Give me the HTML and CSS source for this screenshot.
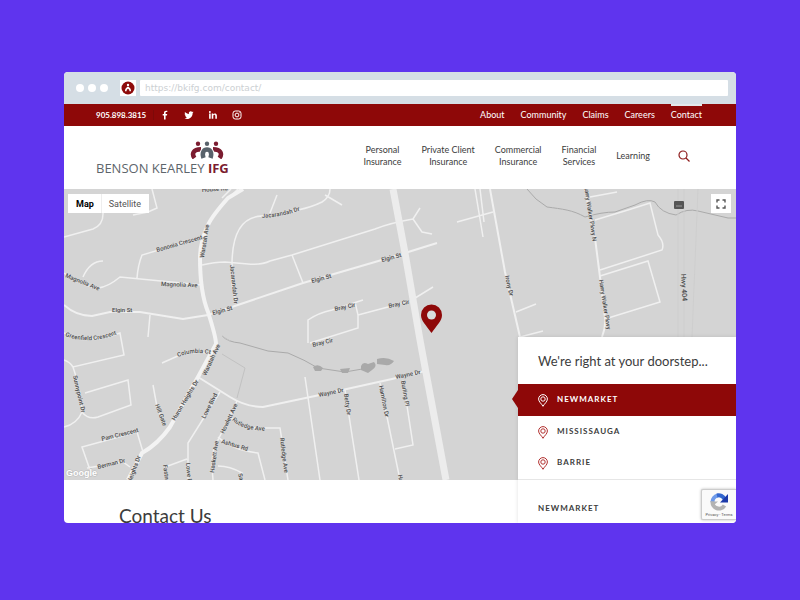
FILE: index.html
```html
<!DOCTYPE html>
<html lang="en">
<head>
    <meta charset="UTF-8">
    <meta name="viewport" content="width=device-width, initial-scale=1.0">
    <title>Contact Us - Benson Kearley IFG</title>
    <link rel="stylesheet" href="styles.css">
</head>
<body>
<div class="browser">
    <div class="browser-bar">
        <span class="dot"></span><span class="dot"></span><span class="dot"></span>
        <span class="favicon">
            <svg viewBox="0 0 16 16" width="16" height="16"><rect width="16" height="16" fill="#fff"/><circle cx="8" cy="8" r="6.5" fill="#8e0b0b"/><circle cx="8" cy="5" r="1.2" fill="#fff"/><path d="M5 11.300Q4.800 8.300 8 6.600 11.200 8.300 11 11.300L9.500 11.300Q9.600 9.300 8 8.800 6.400 9.300 6.500 11.300Z" fill="#fff"/></svg>
        </span>
        <input class="url" type="text" aria-label="Address" value="https://bkifg.com/contact/">
    </div>

    <div class="topbar">
        <a class="phone" href="#">905.898.3815</a>
        <div class="social">
            <a href="#" aria-label="Facebook"><svg viewBox="0 0 10 10" width="10" height="10"><path d="M4 9.5V5.6H2.7V4.1H4V3C4 1.5 4.8.7 6.1.7L7.3.8V2.1H6.5C5.8 2.1 5.6 2.5 5.6 3V4.1H7.2L7 5.6H5.6V9.5Z" fill="#fff"/></svg></a>
            <a href="#" aria-label="Twitter"><svg viewBox="0 0 10 10" width="10" height="10"><path d="M9.5 2.2 8.6 3.2C8.7 6.4 6.2 9 3.2 9 2.1 9 1.2 8.700.5 8.200 1.500 8.300 2.400 8 3.100 7.500 2.200 7.400 1.600 6.900 1.400 6.200H2.200C1.300 5.900.7 5.200.7 4.300L1.500 4.500C.7 3.900.5 2.900 1 2 2 3.100 3.300 3.800 4.900 3.900 4.600 2.400 5.500 1.300 6.800 1.300 7.300 1.300 7.800 1.500 8.100 1.900L9.300 1.500 8.700 2.400Z" fill="#fff"/></svg></a>
            <a href="#" aria-label="LinkedIn"><svg viewBox="0 0 10 10" width="10" height="10" fill="#fff"><circle cx="1.900" cy="1.900" r="1"/><path d="M1.100 3.600H2.700V8.700H1.100ZM3.700 3.600H5.200V4.300C6.100 3.100 8.900 3.200 8.900 5.700V8.700H7.300V6C7.300 4.400 5.300 4.500 5.300 6V8.700H3.700Z"/></svg></a>
            <a href="#" aria-label="Instagram"><svg viewBox="0 0 10 10" width="10" height="10" fill="none" stroke="#fff"><rect x="1" y="1" width="8" height="8" rx="2.300"/><circle cx="5" cy="5" r="1.900"/><circle cx="7.300" cy="2.800" r=".2" stroke-width=".6"/></svg></a>
        </div>
        <nav class="top-links">
            <a href="#">About</a>
            <a href="#">Community</a>
            <a href="#">Claims</a>
            <a href="#">Careers</a>
            <a class="current" href="#">Contact</a>
        </nav>
    </div>

    <header class="header">
        <a class="logo" href="#">
            <svg class="logo-mark" viewBox="0 0 34 18" width="34" height="18">
                <g fill="#7b1c30"><circle cx="8" cy="2.700" r="2.200"/><circle cx="26" cy="2.700" r="2.200"/></g>
                <circle cx="17" cy="2.700" r="2.200" fill="#58626b"/>
                <g fill="none" stroke-width="4.500">
                    <path d="M4.500 17C1.500 13 3 8.200 11 8.200" stroke="#7b1c30"/>
                    <path d="M29.500 17C32.500 13 31 8.200 23 8.200" stroke="#7b1c30"/>
                    <path d="M13.500 17C9.500 5.500 24.500 5.500 20.500 17" stroke="#fff" stroke-width="6.500"/>
                    <path d="M13.500 17C9.500 5.500 24.500 5.500 20.500 17" stroke="#58626b"/>
                </g>
            </svg>
            <span class="logo-text">BENSON KEARLEY <b>IFG</b></span>
        </a>
        <nav class="main-nav">
            <a href="#">Personal<br>Insurance</a>
            <a href="#">Private Client<br>Insurance</a>
            <a href="#">Commercial<br>Insurance</a>
            <a href="#">Financial<br>Services</a>
            <a href="#">Learning</a>
        </nav>
        <button class="search" type="button" aria-label="Search">
            <svg viewBox="0 0 12 12" width="12" height="12" fill="none" stroke="#8e1b1b" stroke-width="1.200"><circle cx="5" cy="5" r="4"/><path d="M8 8 11.500 11.500"/></svg>
        </button>
    </header>

    <main class="main">
        <section class="map">
            <svg class="map-canvas" viewBox="64 189 672 291" preserveAspectRatio="xMinYMin slice">
                <rect x="64" y="189" width="672" height="291" fill="#d4d4d4"/>

                <!-- creek and ponds -->
                <g class="creek">
                    <path d="M527 189Q535 200 547 207C562 209 573 210 585 217Q602 212 615 212L635 205Q648 198 655 202Q661 213 676 215Q687 208 698 211L728 218H736"/>
                    <path d="M222 336Q228 342 240 343L268 351 288 353Q305 360 318 368L345 372 368 368"/>
                </g>
                <g fill="#a9a9a9">
                    <path d="M313 367Q318 363 323 368L321 371H315ZM340 369 350 368 348 373H342ZM361 366Q363 361 368 364L374 362Q378 366 372 370L368 373 361 370ZM377 359Q386 356 394 361Q391 366 385 365L377 364Z"/>
                </g>

                <!-- highway -->
                <g class="highway"><path d="M678 189V337M684 189V337M698 189 692 337"/></g>

                <!-- streets -->
                <g class="street">
                    <path d="M64 237 93 229Q103 225 103 214V205M133 215 148 212 157 208 152 189M137 278Q138 265 142 255L202 237M64 273Q82 286 98 288 108 287 120 277L202 285M83 277Q90 261 103 261"/>
                    <path d="M150 315 148 337M202 265Q215 262 225 262L248 264Q262 265 270 261L292 255 375 229Q390 223 413 219L420 208M413 219 422 232 432 234M292 255 303 283"/>
                    <path d="M237 303Q230 287 232 265 232 217 262 216 285 215 298 210 312 207 322 202 330 197 330 189M325 195 342 205M270 213 277 195M225 202 238 189M222 198 231 189"/>
                    <path d="M308 343V320Q318 313 332 310L363 300M355 302 358 315V328L310 343M358 315 388 307 412 300 433 287"/>
                    <path d="M457 222 493 212M475 189 483 237M480 189 484 222M516 312 536 304M520 337 543 331M590 197 617 192M595 220 628 210 650 203 658 235Q665 243 662 250L600 270M600 276 648 261 660 302 605 319"/>
                    <path d="M64 333Q90 345 120 333L124 355 73 367Q70 362 64 360M73 367Q81 390 82 412 77 424 64 427M85 393 128 380 131 405 98 417Q88 420 82 412"/>
                    <path d="M153 385 157 407 165 425M90 470 82 447 137 432 143 452M87 468 123 462 130 467M162 363 180 355Q196 351 207 353"/>
                    <path d="M220 392 188 443V480M167 480 165 467 187 459M237 401 218 440Q210 450 213 480M218 466Q230 466 242 473V480M229 415Q237 428 260 428H280L288 480M218 437Q232 450 258 453L265 480"/>
                    <path d="M305 377 320 480M345 390 359 480M380 383 400 480M403 380 413 445 395 449"/>
                </g>
                <path class="street wide" d="M64 305Q76 316 92 316L110 312H140L183 319 208 315 303 283 375 262 405 253 437 243"/>
                <path class="street wide" d="M490 189 505 272 520 337M585 189 595 238 600 277 605 318Q606 327 602 337"/>
                <path class="street wide" d="M198 377 230 397Q246 407 263 407L315 396 392 379 425 371"/>
                <path class="avenue" d="M243 189 228 198Q212 216 208 225 200 242 200 258 200 292 208 312 216 337 216 344L198 377 170 427Q158 444 142 453L128 480"/>
                <path class="arterial" d="M393 189 405 253 420 340 427 378 446 480"/>
                <path class="trail" d="M222 354 245 368 237 398M222 336 230 341"/>

                <g class="labels">
                    <path id="greenfield" d="M65 336Q91 346 122 332" fill="none" stroke="none"/>
                    <path id="jacaranda" d="M262 218Q283 217 304 209" fill="none" stroke="none"/>
                    <path id="rutledge" d="M232 420Q242 431 272 431" fill="none" stroke="none"/>
                    <path id="columbia" d="M178 357Q195 350 214 355" fill="none" stroke="none"/>
                    <text><textPath href="#greenfield">Greenfield Crescent</textPath></text>
                    <text><textPath href="#jacaranda">Jacarandah Dr</textPath></text>
                    <text><textPath href="#rutledge">Rutledge Ave</textPath></text>
                    <text><textPath href="#columbia">Columbia Ct</textPath></text>
                    <text transform="translate(157 252) rotate(-16)">Bononia Crescent</text>
                    <text transform="translate(204 258) rotate(-81)">Waratah Ave</text>
                    <text transform="translate(65 277) rotate(22)">Magnolia Ave</text>
                    <text transform="translate(161 286) rotate(2)">Magnolia Ave</text>
                    <text transform="translate(112 312)">Elgin St</text>
                    <text transform="translate(213 315) rotate(-15)">Elgin St</text>
                    <text transform="translate(312 283) rotate(-15)">Elgin St</text>
                    <text transform="translate(382 262) rotate(-15)">Elgin St</text>
                    <text transform="translate(230 265) rotate(84)">Jacarandah Dr</text>
                    <text transform="translate(202 192) rotate(-4)">House Rd</text>
                    <text transform="translate(335 311) rotate(-12)">Bray Cir</text>
                    <text transform="translate(389 308) rotate(-12)">Bray Cir</text>
                    <text transform="translate(313 347) rotate(-14)">Bray Cir</text>
                    <text transform="translate(505 276) rotate(77)">Irony Dr</text>
                    <text transform="translate(584 186) rotate(81)">Harry Walker Pkwy N</text>
                    <text transform="translate(599 280) rotate(81)">Harry Walker Pkwy</text>
                    <text class="hwy" transform="translate(681 274) rotate(87)">Hwy 404</text>
                    <text transform="translate(73 376) rotate(77)">Sunnypoint Dr</text>
                    <text transform="translate(102 441) rotate(-14)">Pam Crescent</text>
                    <text transform="translate(98 469) rotate(-14)">Berman Dr</text>
                    <text transform="translate(155 405) rotate(69)">Hill Gate</text>
                    <text transform="translate(175 421) rotate(-59)">Huron Heights Dr</text>
                    <text transform="translate(206 376) rotate(-65)">Waratah Ave</text>
                    <text transform="translate(125 500) rotate(-70)">Huron Heights Dr</text>
                    <text transform="translate(205 419) rotate(-63)">Lowe Blvd</text>
                    <text transform="translate(186 463) rotate(85)">Lowe Blvd</text>
                    <text transform="translate(163 465) rotate(82)">Fastnet</text>
                    <text transform="translate(224 434) rotate(-65)">Howlett Ave</text>
                    <text transform="translate(214 473) rotate(-82)">Haskett Ave</text>
                    <text transform="translate(221 443) rotate(17)">Ashtus Rd</text>
                    <text transform="translate(238 474) rotate(75)">Salem</text>
                    <text transform="translate(280 438) rotate(83)">Rutledge Ave</text>
                    <text transform="translate(319 397) rotate(-12)">Wayne Dr</text>
                    <text transform="translate(396 379) rotate(-12)">Wayne Dr</text>
                    <text transform="translate(344 394) rotate(82)">Betty Dr</text>
                    <text transform="translate(379 386) rotate(79)">Hamilton Dr</text>
                    <text transform="translate(401 381) rotate(80)">Burling Pl</text>
                    <text transform="translate(398 475) rotate(80)">Hamilton</text>
                </g>
                <text class="google" x="66" y="476">Google</text>

                <rect x="674" y="201" width="10" height="8" rx="1" fill="#555"/>
                <path d="M676 206H682" stroke="#999"/>

                <!-- office marker -->
                <path d="M431.500 333C426 325 421 321 421 315A10.500 10.500 0 0 1 442 315C442 321 437 325 431.500 333Z" fill="#8e0808"/>
                <circle cx="431.500" cy="315" r="4.500" fill="#d8dddd"/>
            </svg>
            <div class="map-type">
                <button class="active" type="button">Map</button>
                <button type="button">Satellite</button>
            </div>
            <button class="fullscreen" type="button" aria-label="Toggle fullscreen">
                <svg viewBox="0 0 10 10" width="10" height="10" fill="none" stroke="#555" stroke-width="1.400"><path d="M1 3.500V1H3.500M6.500 1H9V3.500M9 6.500V9H6.500M3.500 9H1V6.500"/></svg>
            </button>
        </section>

        <section class="contact">
            <h1>Contact Us</h1>
        </section>

        <aside class="offices">
            <h2>We're right at your doorstep...</h2>
            <div class="office-list">
                <button class="office selected" type="button">
                    <svg viewBox="0 0 10 13" width="10" height="13"><path d="M5 12.300C3.500 9.500.6 7.800.6 5A4.400 4.400 0 0 1 9.400 5C9.400 7.800 6.500 9.500 5 12.300Z"/><circle cx="5" cy="5" r="2.200"/></svg>
                    NEWMARKET
                </button>
                <button class="office" type="button">
                    <svg viewBox="0 0 10 13" width="10" height="13"><path d="M5 12.300C3.500 9.500.6 7.800.6 5A4.400 4.400 0 0 1 9.400 5C9.400 7.800 6.500 9.500 5 12.300Z"/><circle cx="5" cy="5" r="2.200"/></svg>
                    MISSISSAUGA
                </button>
                <button class="office" type="button">
                    <svg viewBox="0 0 10 13" width="10" height="13"><path d="M5 12.300C3.500 9.500.6 7.800.6 5A4.400 4.400 0 0 1 9.400 5C9.400 7.800 6.500 9.500 5 12.300Z"/><circle cx="5" cy="5" r="2.200"/></svg>
                    BARRIE
                </button>
            </div>
            <h3>NEWMARKET</h3>
        </aside>

        <div class="recaptcha">
            <svg viewBox="0 0 20 20" width="20" height="20" fill="none" stroke-width="4">
                <path d="M3.500 10A6.500 6.500 0 0 1 9 3.500" stroke="#6f9bea"/>
                <path d="M8 3.500A6.500 6.500 0 0 1 15.500 7" stroke="#3266cf"/>
                <path d="M19 2V10.500H11Z" fill="#1c3aa9" stroke="none"/>
                <path d="M3.500 9.500A6.500 6.500 0 0 0 15.500 13.500" stroke="#b3b3b3"/>
                <path d="M1 9.500H9L5 13Z" fill="#b3b3b3" stroke="none"/>
            </svg>
            <span><a href="#">Privacy</a> - <a href="#">Terms</a></span>
        </div>
    </main>
</div>
</body>
</html>
```

FILE: styles.css
```css
* { box-sizing: border-box; }
body { margin: 0; padding: 72px 64px 76px; min-height: 100vh; background-color: #5f34ee; font-family: Lato, "Liberation Sans", sans-serif; color: #3c3c3c; }
a { color: inherit; text-decoration: none; }
button { border: none; padding: 0; margin: 0; background: none; font-family: inherit; cursor: pointer; }
svg { display: block; }

.browser { background-color: #fff; border-radius: 4px; overflow: hidden; }
.browser-bar { display: flex; align-items: center; gap: 4px; height: 32px; padding: 0 8px 0 12px; background-color: #d5dee5; }
.dot { width: 8px; height: 8px; border-radius: 50%; background-color: #fff; }
.favicon { margin: 0 0 0 8px; }
.url { flex: 1; min-width: 0; height: 16px; border: none; border-radius: 1px; padding: 0 5px; background-color: #fff; color: #ccd0d3; font-family: "DejaVu Sans", sans-serif; font-size: 9px; }

.topbar { display: flex; align-items: center; height: 22px; padding: 0 34px 0 32px; background-color: #8e0808; color: #fff; font-size: 9px; }
.phone { font-size: 8px; font-weight: bold; }
.social { display: flex; gap: 14px; margin-left: 7px; padding-left: 6px; border-left: 1px solid #7d0909; line-height: 22px; }
.top-links { display: flex; gap: 16px; margin-left: auto; line-height: 22px; }
.top-links .current { border-top: 2px solid #e4e7ea; line-height: 18px; padding-bottom: 2px; }

.header { display: flex; align-items: center; height: 63px; padding: 0 46px 3px 32px; }
.logo { margin-top: 5px; }
.logo-mark { margin: 0 5px 0 auto; }
.logo-text { display: block; font-family: "Open Sans", sans-serif; font-size: 13px; line-height: 18px; color: #5d656b; white-space: nowrap; }
.logo-text b { color: #7b1c30; }
.main-nav { display: flex; align-items: center; gap: 20px; margin-left: auto; font-size: 9px; line-height: 12px; text-align: center; white-space: nowrap; }
.search { margin-left: 28px; }

.main { position: relative; }
.map { position: relative; height: 291px; background-color: #d4d4d4; overflow: hidden; }
.map-canvas { width: 100%; height: 100%; }
.street, .avenue, .arterial, .creek, .highway, .trail { fill: none; }
.street { stroke: #f0f0f0; stroke-width: 1.5; }
.wide { stroke-width: 2; }
.avenue { stroke: #f3f3f3; stroke-width: 4; }
.arterial { stroke: #ececec; stroke-width: 7; }
.creek { stroke: #aaa; stroke-width: 1; }
.highway { stroke: #cecece; stroke-width: 1; }
.trail { stroke: #c2c2c2; stroke-width: 1; }
.labels { font-family: Roboto, sans-serif; font-size: 6px; font-weight: 500; fill: #4a4a4a; stroke: #dcdcdc; stroke-width: 1px; paint-order: stroke; }
.labels .hwy { font-size: 7px; }
.google { font-family: "Liberation Sans", sans-serif; font-size: 9px; font-weight: bold; fill: #fff; stroke: #bbb; stroke-width: 1px; paint-order: stroke; }
.map-type { position: absolute; top: 5px; left: 4px; display: flex; background-color: #fff; }
.map-type button { height: 19px; padding: 0 8px 0 7px; font-family: Roboto, sans-serif; font-size: 9px; color: #555; }
.map-type .active { padding: 0 7px 0 8px; font-weight: bold; color: #000; border-right: 1px solid #eee; }
.fullscreen { position: absolute; top: 5px; right: 5px; width: 20px; height: 19px; padding: 0 5px; background-color: #fff; }

.contact { height: 43px; padding: 25px 55px 0; }
.contact h1 { margin: 0; font-size: 19px; line-height: 22px; font-weight: normal; }

.offices { position: absolute; top: 148px; right: 0; bottom: 0; width: 218px; background-color: #fff; box-shadow: 0 0 4px rgba(0, 0, 0, 0.12); }
.offices h2 { margin: 0; padding: 2px 20px 0; font-size: 13px; line-height: 45px; font-weight: normal; white-space: nowrap; }
.office-list { padding-bottom: 1px; border-bottom: 1px solid #e6e6e6; }
.office { display: flex; align-items: center; gap: 9px; width: 100%; height: 31px; padding: 0 20px 2px; font-size: 8px; font-weight: bold; letter-spacing: 1px; color: #3c3c3c; }
.office svg { margin-top: 3px; fill: none; stroke: #b2302f; stroke-width: 1; }
.selected { position: relative; height: 32px; background-color: #8e0808; color: #fff; }
.selected svg { stroke: #fff; }
.selected::before { content: ""; position: absolute; top: 6px; left: -6px; border: 9px solid transparent; border-left: none; border-right: 6px solid #8e0808; }
.offices h3 { margin: 0; padding: 22px 20px 0; font-size: 8px; line-height: 12px; letter-spacing: 1px; }

.recaptcha { position: absolute; right: 0; bottom: 3px; display: flex; flex-direction: column; align-items: center; width: 35px; height: 31px; padding-top: 2px; background-color: #fafafa; border: 1px solid #ccc; border-right: none; border-radius: 2px 0 0 2px; box-shadow: 0 0 3px #bbb; }
.recaptcha span { font-family: Roboto, sans-serif; font-size: 4px; line-height: 6px; color: #555; }
```
